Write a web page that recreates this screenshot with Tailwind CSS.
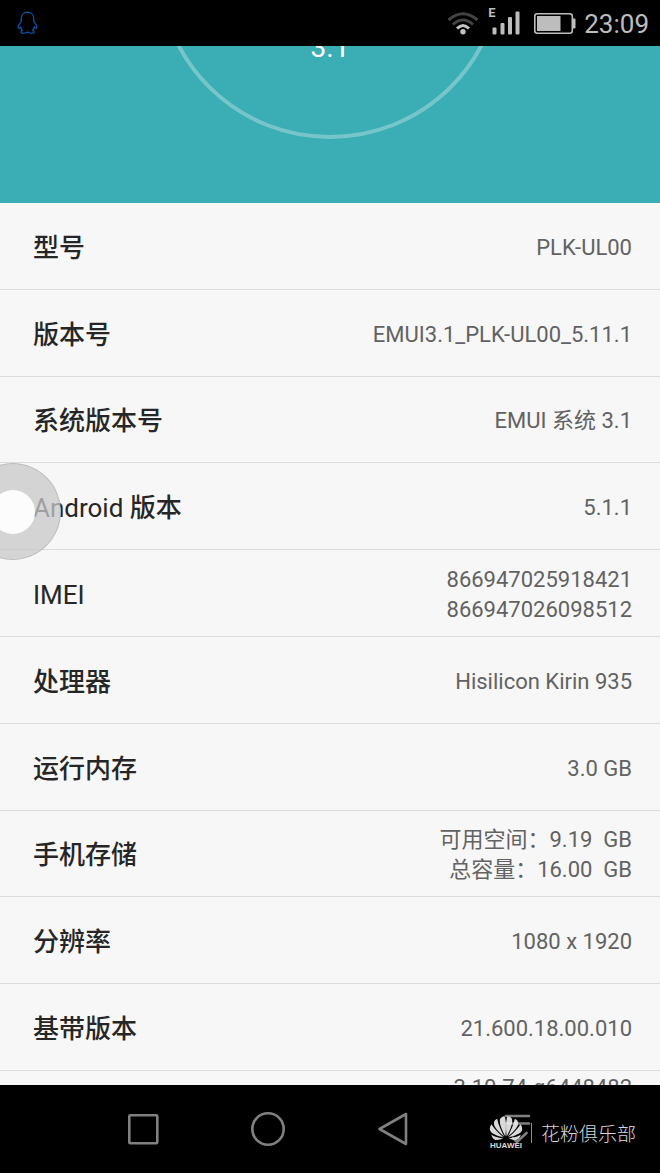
<!DOCTYPE html>
<html lang="zh-CN">
<head>
    <meta charset="UTF-8">
    <meta name="viewport" content="width=device-width, initial-scale=1.0">
    <title>关于手机</title>
    <script src="https://cdn.jsdelivr.net/npm/@tailwindcss/browser@4"></script>
</head>
<body class="relative flex h-screen flex-col overflow-hidden bg-[#f7f7f7] font-[Roboto,'Noto_Sans_CJK_SC',sans-serif]">

    <!-- Status bar -->
    <header class="flex h-[46px] shrink-0 items-center justify-between bg-black pl-4 pr-[11px] text-[#bdbdbd]">
        <svg class="h-6 w-6" viewBox="0 0 24 24" fill="none" stroke="#0b53a6" stroke-width="1.3" stroke-linejoin="round">
            <path d="M11.5 1.2C7.6 1.2 5.2 4 5.2 8v2.4C4.200 11.800 2.400 13.800 2.200 16c0 1.200.4 1.400 1 1.200.6-.2 1-.7 1.400-1.200.3 1.300.9 2.400 1.800 3.300-1 .4-1.500.9-1.500 1.600 0 1 1.300 1.200 3 1.200 1.600 0 2.900-.4 3.600-1 .7.600 2 1 3.600 1 1.700 0 3-.2 3-1.200 0-.7-.5-1.200-1.500-1.600.9-.9 1.500-2 1.800-3.300.4.500.8 1 1.400 1.200.6.200 1 0 1-1.200-.2-2.200-2-4.200-3-5.600V8c0-4-2.400-6.800-6.300-6.800z"/>
        </svg>
        <div class="flex items-center">
            <svg class="h-6 w-8" viewBox="0 0 32 24" fill="none" stroke-width="3">
                <path d="M1.500 9Q16-3.500 30.500 9" stroke="#444"/>
                <path d="M6 13.500Q16 4.500 26 13.500" stroke="#444"/>
                <path d="M10 17.500Q16 11.500 22 17.500" stroke="#c4c4c4"/>
                <circle cx="16" cy="20.700" r="2.700" fill="#c4c4c4"/>
            </svg>
            <div class="relative ml-[9px] h-[46px] w-8">
                <span class="absolute left-0 top-[6px] text-[13px] font-bold leading-[14px]">E</span>
                <svg class="h-[46px] w-8" viewBox="0 0 32 46" fill="#bdbdbd">
                    <rect x="4.500" y="27.500" width="4" height="7" rx="1"/>
                    <rect x="12.500" y="23" width="4" height="11.500" rx="1"/>
                    <rect x="20" y="17" width="4" height="17.500" rx="1"/>
                    <rect x="27.500" y="11.500" width="4" height="23" rx="1"/>
                </svg>
            </div>
            <svg class="ml-[14px] h-6 w-[42px]" viewBox="0 0 42 24">
                <rect x=".8" y="2.800" width="37.500" height="19.500" rx="2.500" fill="none" stroke="#bdbdbd" stroke-width="1.600"/>
                <rect x="3" y="5" width="23.500" height="15" fill="#bdbdbd"/>
                <path d="M39 7.500h1.500q1 0 1 1v8q0 1-1 1H39z" fill="#bdbdbd"/>
            </svg>
            <time class="ml-2 pt-[2px] text-[26px] leading-[30px]">23:09</time>
        </div>
    </header>

    <!-- EMUI version circle, scrolled half out of view -->
    <section class="flex h-[157px] shrink-0 items-end justify-center overflow-hidden bg-[#3badb4] pb-16">
        <div class="flex h-[346px] w-[346px] shrink-0 items-end justify-center rounded-full border-4 border-white/30 pb-[72px]">
            <p class="text-[28px] leading-[30px] text-white">3.1</p>
        </div>
    </section>

    <main class="flex min-h-0 flex-1 flex-col">
        <dl class="grid flex-1 auto-rows-fr text-[22px] leading-[30px] text-[#626262]">
            <div class="flex items-center justify-between border-b border-[#dcdcdc] pl-[33px] pr-7 pt-1">
                <dt class="text-[26px] font-medium text-[#262626]">型号</dt>
                <dd>PLK-UL00</dd>
            </div>
            <div class="flex items-center justify-between border-b border-[#dcdcdc] pl-[33px] pr-7 pt-1">
                <dt class="text-[26px] font-medium text-[#262626]">版本号</dt>
                <dd>EMUI3.1_PLK-UL00_5.11.1</dd>
            </div>
            <div class="flex items-center justify-between border-b border-[#dcdcdc] pl-[33px] pr-7 pt-1">
                <dt class="text-[26px] font-medium text-[#262626]">系统版本号</dt>
                <dd>EMUI 系统 3.1</dd>
            </div>
            <div class="flex items-center justify-between border-b border-[#dcdcdc] pl-[33px] pr-7 pt-1">
                <dt class="text-[26px] text-[#262626]">Android <span class="font-medium">版本</span></dt>
                <dd>5.1.1</dd>
            </div>
            <div class="flex items-center justify-between border-b border-[#dcdcdc] pl-[33px] pr-7 pt-1">
                <dt class="text-[26px] text-[#262626]">IMEI</dt>
                <dd class="text-right">866947025918421<br>866947026098512</dd>
            </div>
            <div class="flex items-center justify-between border-b border-[#dcdcdc] pl-[33px] pr-7 pt-1">
                <dt class="text-[26px] font-medium text-[#262626]">处理器</dt>
                <dd>Hisilicon Kirin 935</dd>
            </div>
            <div class="flex items-center justify-between border-b border-[#dcdcdc] pl-[33px] pr-7 pt-1">
                <dt class="text-[26px] font-medium text-[#262626]">运行内存</dt>
                <dd>3.0 GB</dd>
            </div>
            <div class="flex items-center justify-between border-b border-[#dcdcdc] pl-[33px] pr-7 pt-1">
                <dt class="text-[26px] font-medium text-[#262626]">手机存储</dt>
                <dd class="text-right">可用空间：9.19&nbsp; GB<br>总容量：16.00&nbsp; GB</dd>
            </div>
            <div class="flex items-center justify-between border-b border-[#dcdcdc] pl-[33px] pr-7 pt-1">
                <dt class="text-[26px] font-medium text-[#262626]">分辨率</dt>
                <dd>1080 x 1920</dd>
            </div>
            <div class="flex items-center justify-between border-b border-[#dcdcdc] pl-[33px] pr-7 pt-1">
                <dt class="text-[26px] font-medium text-[#262626]">基带版本</dt>
                <dd>21.600.18.00.010</dd>
            </div>
        </dl>
        <!-- Kernel version, cut off by the navigation bar -->
        <p class="h-[14px] shrink-0 overflow-hidden pr-7 pt-[2px] text-right text-[22px] leading-[30px] text-[#626262]">3.10.74-g6448482</p>
    </main>

    <!-- Floating dock button -->
    <button type="button" aria-label="悬浮按钮" class="absolute -left-9 top-[463px] flex h-[97px] w-[97px] items-center justify-center rounded-full border border-[#b4b4b4]/70 bg-[#c8c8c8]/75">
        <span class="h-11 w-11 rounded-full bg-[#fcfcfc]"></span>
    </button>

    <!-- Navigation bar -->
    <nav class="relative grid h-[88px] shrink-0 grid-cols-4 items-center bg-black px-20">
        <button type="button" aria-label="最近任务" class="flex justify-center">
            <svg class="h-9 w-9" viewBox="0 0 36 36" fill="none" stroke="#808080" stroke-width="2.600"><rect x="4.300" y="4.300" width="28" height="28" rx="1"/></svg>
        </button>
        <button type="button" aria-label="主页" class="flex justify-center">
            <svg class="h-9 w-9" viewBox="0 0 36 36" fill="none" stroke="#808080" stroke-width="2.600"><circle cx="18" cy="18" r="15.700"/></svg>
        </button>
        <button type="button" aria-label="返回" class="flex justify-center">
            <svg class="h-9 w-9" viewBox="0 0 36 36" fill="none" stroke="#808080" stroke-width="2.600" stroke-linejoin="round"><path d="M31 3v30L4.500 18z"/></svg>
        </button>
        <button type="button" aria-label="通知栏" class="flex justify-center">
            <svg class="h-9 w-9" viewBox="0 0 36 36" fill="none" stroke="#808080" stroke-width="2.600" stroke-linecap="round"><path d="M6 5h23M6 12.500h23M13 27l4 4 9.500-9"/></svg>
        </button>

        <!-- Huawei fan club mark -->
        <div class="absolute right-6 top-[30px] flex items-center text-[#d8d8d8]">
            <div class="flex flex-col items-center">
                <svg class="h-[26px] w-[34px]" viewBox="0 0 34 26" fill="#ececec" fill-opacity=".92">
                    <g id="half">
                        <path d="M16.300 21.500C13 15 10.200 9 10.900 4.500 11.300 2.500 13.500 1.400 15.600 1.200 17.300 5 17.200 15 16.300 21.500z"/>
                        <path d="M15.300 21.700C10 17 4.800 12.500 4.900 8 5 6 6.500 4.500 8.200 3.800 9.200 9.500 12.500 16.500 15.300 21.700z"/>
                        <path d="M14.700 22.500C8.500 20.700 2.200 18.800 1 15.200 .5 13 1.200 11 2.600 9.300 5 14 10.500 19 14.700 22.500z"/>
                        <path d="M14.400 23.500C10 25.200 6.500 25.600 4.500 23.800 3.300 22.700 2.600 21.200 2.300 19.800 6 22 10.500 23.200 14.400 23.500z"/>
                    </g>
                    <use href="#half" transform="matrix(-1 0 0 1 34 0)"/>
                </svg>
                <span class="font-['Liberation_Sans',sans-serif] text-[8px] font-bold leading-[9px]">HUAWEI</span>
            </div>
            <span class="ml-2 h-5 w-px bg-[#8a8a8a]"></span>
            <span class="ml-[9px] font-['Noto_Sans_CJK_SC',sans-serif] text-[19px] font-light leading-[28px]">花粉俱乐部</span>
        </div>
    </nav>
</body>
</html>
